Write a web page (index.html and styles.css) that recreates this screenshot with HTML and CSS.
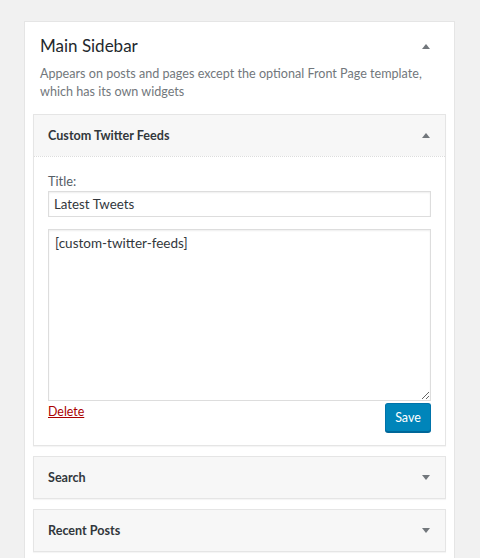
FILE: index.html
```html
<!DOCTYPE html>
<html>
<head>
<meta charset="utf-8">
<link rel="stylesheet" href="styles.css">
</head>
<body>
<div class="sidebar">
  <div class="sidebar-head">
    <h2 class="sidebar-title">Main Sidebar</h2>
    <span class="arrow up"></span>
  </div>
  <p class="sidebar-desc">Appears on posts and pages except the optional Front Page template, which has its own widgets</p>

  <div class="widget">
    <div class="widget-top">
      <span class="widget-title">Custom Twitter Feeds</span>
      <span class="arrow up"></span>
    </div>
    <div class="widget-inside">
      <label class="field-label">Title:</label>
      <input class="text-input" type="text" value="Latest Tweets">
      <textarea class="text-area">[custom-twitter-feeds]</textarea>
      <div class="widget-control">
        <a class="delete-link" href="#">Delete</a>
        <button class="save-btn">Save</button>
      </div>
    </div>
  </div>

  <div class="widget">
    <div class="widget-top">
      <span class="widget-title">Search</span>
      <span class="arrow down"></span>
    </div>
  </div>

  <div class="widget">
    <div class="widget-top">
      <span class="widget-title">Recent Posts</span>
      <span class="arrow down"></span>
    </div>
  </div>
</div>
</body>
</html>
```
FILE: styles.css
```css
html, body {
  margin: 0;
  padding: 0;
}
body {
  background: #f1f1f1;
  font-family: Lato, "Open Sans", sans-serif;
  font-size: 12.5px;
  color: #23282d;
  height: 558px;
  overflow: hidden;
}
.sidebar {
  margin: 21px 0 0 24px;
  width: 413px;
  min-height: 600px;
  background: #fff;
  border: 1px solid #e5e5e5;
  padding: 0 8px;
}
.sidebar-head {
  display: flex;
  align-items: center;
  justify-content: space-between;
  padding: 12px 16px 0 7px;
}
.sidebar-title {
  margin: 0;
  font-size: 17px;
  font-weight: 400;
  line-height: 24px;
  color: #23282d;
}
.sidebar-desc {
  margin: 7px 7px 13px 7px;
  color: #72777c;
  line-height: 18px;
  font-size: 12.6px;
}
.arrow {
  width: 0;
  height: 0;
  border-left: 4px solid transparent;
  border-right: 4px solid transparent;
}
.arrow.up {
  border-bottom: 5px solid #72777c;
}
.arrow.down {
  border-top: 5px solid #72777c;
}
.widget {
  border: 1px solid #e5e5e5;
  box-shadow: 0 1px 1px rgba(0,0,0,0.04);
  margin-bottom: 10px;
  background: #f7f7f7;
}
.widget-top {
  height: 41px;
  display: flex;
  align-items: center;
  justify-content: space-between;
  padding: 0 15px 0 14px;
}
.widget-title {
  font-weight: 700;
  font-size: 12.6px;
  color: #32373c;
}
.widget-inside {
  background: #fff;
  border-top: 1px dotted #ddd;
  padding: 15px 14px 13px 14px;
  display: flex;
  flex-direction: column;
}
.field-label {
  line-height: 18px;
  color: #555d66;
  margin-bottom: 1px;
  font-size: 12.8px;
}
.text-input {
  box-sizing: border-box;
  height: 26px;
  width: 100%;
  margin: 0;
  border: 1px solid #ddd;
  box-shadow: inset 0 1px 2px rgba(0,0,0,0.07);
  padding: 0 5px;
  font-family: inherit;
  font-size: 13.3px;
  color: #32373c;
}
.text-area {
  box-sizing: border-box;
  height: 172px;
  width: 100%;
  margin: 12px 0 0 0;
  border: 1px solid #ddd;
  box-shadow: inset 0 1px 2px rgba(0,0,0,0.07);
  padding: 3px 6px;
  font-family: inherit;
  font-size: 13.5px;
  line-height: 20px;
  color: #32373c;
  resize: vertical;
}
.widget-control {
  display: flex;
  justify-content: space-between;
  align-items: flex-start;
  margin-top: 2px;
}
.delete-link {
  color: #a00;
  text-decoration: underline;
  line-height: 18px;
  font-size: 12.4px;
}
.save-btn {
  box-sizing: border-box;
  height: 29px;
  width: 46px;
  padding: 0;
  background: #0085ba;
  border: 1px solid #0073aa;
  border-bottom-color: #006799;
  border-radius: 3px;
  box-shadow: 0 1px 0 #006799;
  color: #fff;
  font-family: inherit;
  font-size: 12.5px;
  line-height: 26px;
}
```
